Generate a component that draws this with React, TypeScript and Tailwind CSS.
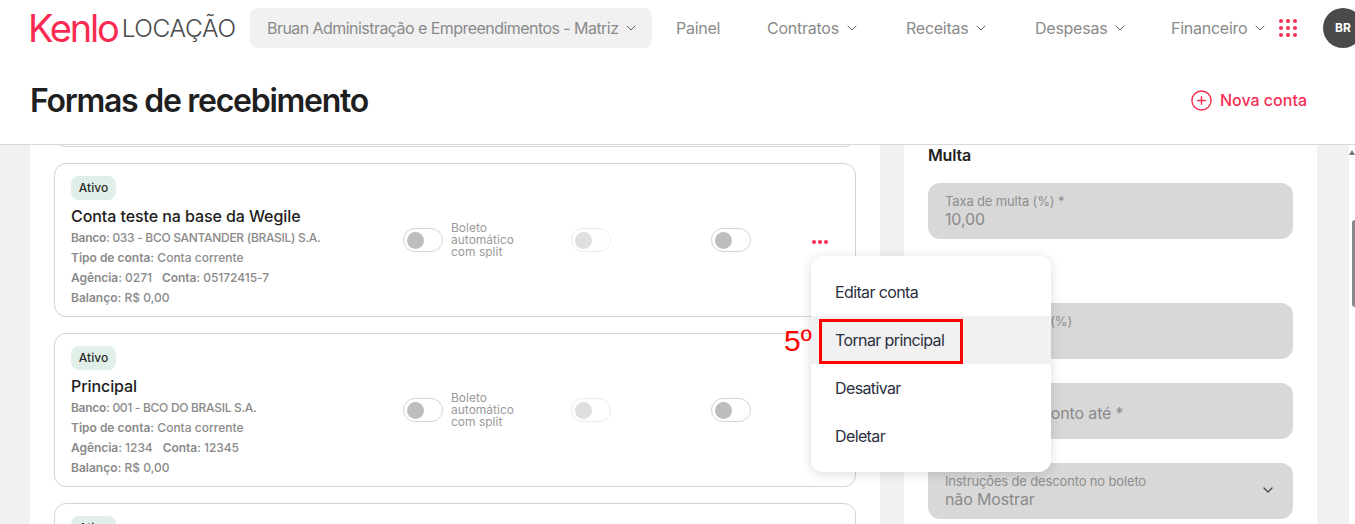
import React from "react";
import { ChevronDown, CirclePlus } from "lucide-react";

function Toggle({ light }: { light?: boolean }) {
  return (
    <div className={`flex h-6 w-10 items-center rounded-full border pl-[3px] ${light ? "border-[#ececec]" : "border-[#d4d4d4]"}`}>
      <div className={`h-[17px] w-[17px] rounded-full ${light ? "bg-[#dfdfdf]" : "bg-[#bdbdbd]"}`} />
    </div>
  );
}

function Badge() {
  return <div className="flex h-6 w-[45px] items-center justify-center rounded-lg bg-[#e0f0e8] text-xs font-medium text-[#2b2b2b]">Ativo</div>;
}

function Account({ name, bank, ag, conta }: { name: string; bank: string; ag: string; conta: string }) {
  return (
    <div className="flex h-[154px] shrink-0 items-center rounded-xl border border-[#d4d4d4] pl-4">
      <div className="w-[332px] shrink-0 pt-1">
        <Badge />
        <div className="mt-[6px] h-[21px] text-base leading-[21px] font-medium tracking-[-0.08px] text-[#1c1c1c]">{name}</div>
        <div className="mt-[1px] text-xs leading-5 font-medium text-[#8a8a8a]">
          <div className="tracking-[-0.3px]"><span className="font-semibold">Banco:</span> {bank}</div>
          <div><span className="font-semibold">Tipo de conta:</span> Conta corrente</div>
          <div className="tracking-[-0.05px]"><span className="font-semibold">Agência:</span> {ag}<span className="ml-[10px] font-semibold">Conta:</span> {conta}</div>
          <div><span className="font-semibold">Balanço:</span> R$ 0,00</div>
        </div>
      </div>
      <div className="flex w-[168px] shrink-0 items-center gap-2">
        <Toggle />
        <div className="text-xs leading-3 text-[#9a9a9a]">Boleto<br />automático<br />com split</div>
      </div>
      <div className="w-[140px] shrink-0"><Toggle light /></div>
      <div className="w-[101px] shrink-0"><Toggle /></div>
      <div className="mt-[3px] flex gap-[2px]">
        <span className="h-1 w-1 rounded-full bg-[#f82e52]" />
        <span className="h-1 w-1 rounded-full bg-[#f82e52]" />
        <span className="h-1 w-1 rounded-full bg-[#f82e52]" />
      </div>
    </div>
  );
}

function Field({ label, value, chevron, lowered }: { label?: string; value?: string; chevron?: boolean; lowered?: boolean }) {
  return (
    <div className={`relative flex h-14 shrink-0 flex-col justify-center rounded-xl bg-[#d8d8d8] px-[17px] ${lowered ? "pt-1" : ""}`}>
      {label && <div className="text-[13px] leading-4 tracking-[-0.15px] text-[#8e8e8e]">{label}</div>}
      {value && <div className="text-base leading-5 tracking-[-0.15px] text-[#8a8a8a]">{value}</div>}
      {chevron && <ChevronDown className="absolute top-[19px] right-[17px] h-4 w-4 text-[#4a4a4a]" />}
    </div>
  );
}

function Chevron() {
  return <ChevronDown className="h-[16px] w-[16px] shrink-0 text-[#555]" strokeWidth={1.4} />;
}

function Nav({ label, chevron = true, width }: { label: string; chevron?: boolean; width: string }) {
  return (
    <div className={`flex shrink-0 items-center gap-[5px] text-base tracking-[-0.25px] text-[#8a8a8a] ${width}`}>
      {label}
      {chevron && <Chevron />}
    </div>
  );
}

export default function App() {
  return (
    <div className="relative flex h-[524px] w-[1355px] flex-col overflow-hidden bg-white font-['Inter',sans-serif]">
      <header className="h-[145px] shrink-0 border-b border-[#d9d9d9] bg-white">
        <div className="flex h-14 items-start pt-2 pl-[30px]">
          <div className="flex h-10 w-[220px] shrink-0 items-center">
            <span className="-ml-[2px] text-[38px] leading-none font-normal tracking-[-2.2px] text-[#fb2a52]">Kenlo</span>
            <span className="ml-[4px] text-[24.5px] leading-none font-light tracking-[-0.4px] text-[#4a4a4a]">LOCAÇÃO</span>
          </div>
          <div className="flex h-10 w-[402px] shrink-0 items-center gap-[5px] rounded-lg bg-[#f1f1f1] pl-[17px] text-base tracking-[-0.55px] whitespace-nowrap text-[#8a8a8a]">
            Bruan Administração e Empreendimentos - Matriz
            <Chevron />
          </div>
          <div className="ml-6 flex h-10 shrink-0 items-center">
            <Nav label="Painel" chevron={false} width="w-[91px]" />
            <Nav label="Contratos" width="w-[139px]" />
            <Nav label="Receitas" width="w-[129px]" />
            <Nav label="Despesas" width="w-[136px]" />
            <Nav label="Financeiro" width="w-[108px]" />
            <div className="grid w-[18px] shrink-0 grid-cols-3 gap-[3px]">
              {Array.from({ length: 9 }).map((_, i) => (
                <span key={i} className="h-1 w-1 rounded-full bg-[#f82e52]" />
              ))}
            </div>
            <div className="ml-[26px] flex h-10 w-10 shrink-0 items-center justify-center rounded-full bg-[#4a4a4a] text-xs font-bold text-white">BR</div>
          </div>
        </div>
        <div className="flex h-[88px] items-center justify-between pr-12 pl-[30px]">
          <h1 className="pt-[2px] text-[32px] font-semibold tracking-[-1.27px] text-[#1f1f1f]">Formas de recebimento</h1>
          <div className="flex items-center gap-[7px] text-base font-medium text-[#f82e52]">
            <CirclePlus className="h-[23px] w-[23px]" strokeWidth={1.5} />
            Nova conta
          </div>
        </div>
      </header>

      <main className="flex min-h-0 flex-1 overflow-hidden bg-[#f1f1f1] pl-[30px]">
        <section className="flex w-[850px] shrink-0 flex-col gap-4 bg-white px-6">
          <div className="-mt-[20px] h-[22px] shrink-0 rounded-xl border border-[#d4d4d4]" />
          <Account name="Conta teste na base da Wegile" bank="033 - BCO SANTANDER (BRASIL) S.A." ag="0271" conta="05172415-7" />
          <Account name="Principal" bank="001 - BCO DO BRASIL S.A." ag="1234" conta="12345" />
          <div className="h-[154px] shrink-0 rounded-xl border border-[#d4d4d4] pt-3 pl-4">
            <Badge />
          </div>
        </section>
        <section className="ml-6 flex w-[413px] shrink-0 flex-col bg-white px-6">
          <div className="h-[38px] shrink-0 text-base leading-5 font-semibold tracking-[-0.2px] text-[#222]">Multa</div>
          <Field label="Taxa de multa (%) *" value="10,00" />
          <div className="h-16 shrink-0" />
          <Field label="Taxa de juros dia (%)" value={"\u00A0"} />
          <div className="h-6 shrink-0" />
          <Field value="Oferecer desconto até *" lowered />
          <div className="h-6 shrink-0" />
          <Field label="Instruções de desconto no boleto" value="não Mostrar" chevron />
        </section>
        <div className="ml-8 flex w-[6px] shrink-0 flex-col items-end bg-white">
          <div className="mt-[5px] h-0 w-0 border-x-[3px] border-b-[5px] border-x-transparent border-b-[#777]" />
          <div className="mt-[65px] h-[87px] w-[3px] rounded-l-sm bg-[#8a8a8a]" />
        </div>
      </main>

      <div className="absolute top-[256px] left-[811px] w-[240px] rounded-xl bg-white py-3 text-base tracking-[-0.62px] text-[#2b3040] shadow-[0_2px_12px_rgba(0,0,0,0.14)]">
        <div className="flex h-12 items-center pl-6">Editar conta</div>
        <div className="flex h-12 items-center bg-[#f1f1f1] pl-6">Tornar principal</div>
        <div className="flex h-12 items-center pl-6">Desativar</div>
        <div className="flex h-12 items-center pl-6">Deletar</div>
      </div>
      <div className="absolute top-[319px] left-[819px] h-[45px] w-[144px] border-[3px] border-[#f00]" />
      <div className="absolute top-[323px] left-[784px] font-['Liberation_Sans',sans-serif] text-[30px] leading-9 text-[#f00]">5º</div>
    </div>
  );
}
